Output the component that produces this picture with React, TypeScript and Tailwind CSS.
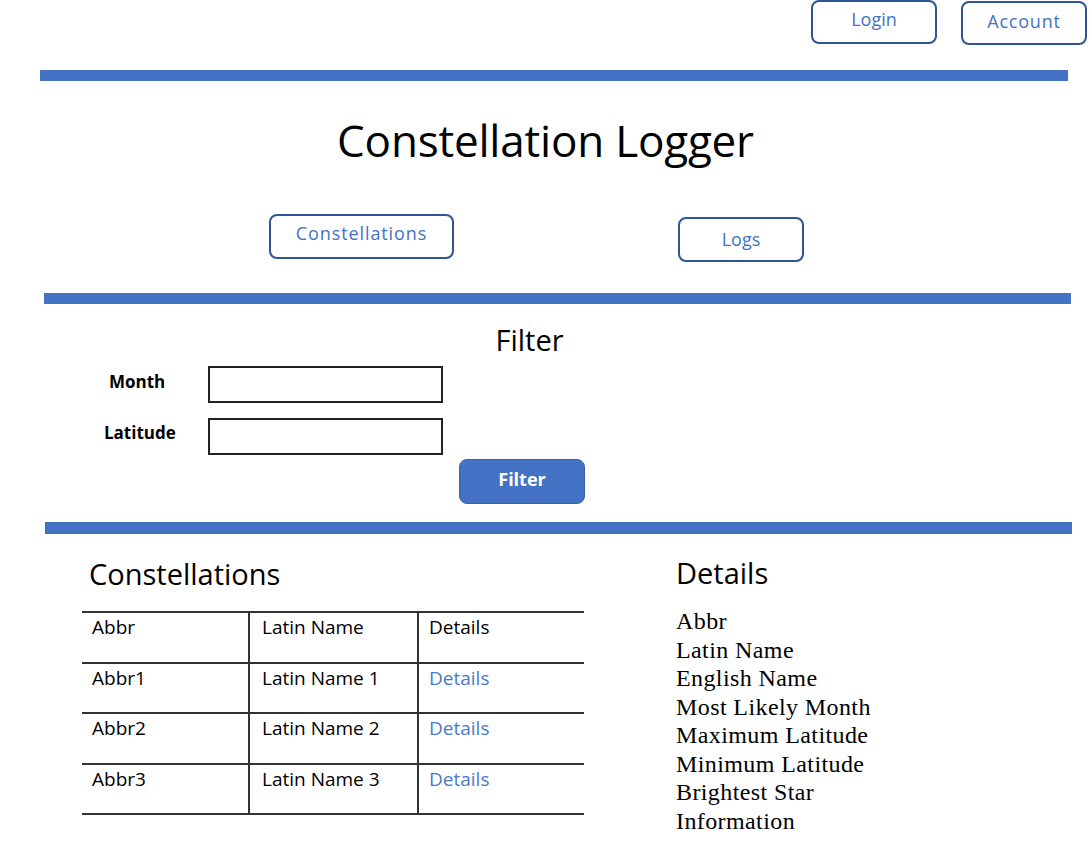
import React from "react";

const sans = { fontFamily: '"Open Sans", "Noto Sans", sans-serif' };

function OutlineBtn({ label, className }: { label: string; className: string }) {
  return (
    <div
      className={`flex items-center justify-center border-2 border-[#2f5597] rounded-[8px] text-[#4472c4] text-[18px] ${className}`}
    >
      {label}
    </div>
  );
}

export default function App() {
  const rows = [
    ["Abbr1", "Latin Name 1"],
    ["Abbr2", "Latin Name 2"],
    ["Abbr3", "Latin Name 3"],
  ];
  const details = [
    "Abbr",
    "Latin Name",
    "English Name",
    "Most Likely Month",
    "Maximum Latitude",
    "Minimum Latitude",
    "Brightest Star",
    "Information",
  ];
  return (
    <div className="w-[1091px] h-[841px] bg-white text-black overflow-hidden" style={sans}>
      {/* top buttons */}
      <div className="flex justify-end items-start pr-[4px] gap-[24px]">
        <OutlineBtn label="Login" className="w-[126px] h-[44px] mt-[0px] pb-[6px]" />
        <OutlineBtn label="Account" className="w-[126px] h-[44px] mt-[1px] pb-[4px] tracking-[0.8px]" />
      </div>
      <div className="ml-[40px] mt-[25px] w-[1028px] h-[11px] bg-[#4472c4]" />

      {/* title */}
      <div className="mt-[31px] flex justify-center">
        <h1 className="text-[44px] leading-[56px] tracking-[-0.2px]">Constellation Logger</h1>
      </div>

      {/* nav */}
      <div className="flex items-start mt-[46px]">
        <OutlineBtn label="Constellations" className="ml-[269px] w-[185px] h-[45px] pb-[6px] tracking-[0.9px]" />
        <OutlineBtn label="Logs" className="ml-[224px] mt-[3px] w-[126px] h-[45px]" />
      </div>

      <div className="ml-[44px] mt-[31px] w-[1027px] h-[11px] bg-[#4472c4]" />

      {/* filter */}
      <div className="relative h-[218px]">
        <div className="flex justify-center pt-[17px]">
          <div className="ml-[-32px] text-[29px] leading-[37px]">Filter</div>
        </div>
        <div className="flex items-center mt-[8px]">
          <div className="w-[208px] pl-[109px] pb-[6px] text-[17px] font-bold">Month</div>
          <div className="w-[235px] h-[37px] border-2 border-[#222]" />
        </div>
        <div className="flex items-center mt-[15px]">
          <div className="w-[208px] pl-[104px] pb-[8px] text-[17px] font-bold">Latitude</div>
          <div className="w-[235px] h-[37px] border-2 border-[#222]" />
        </div>
        <div className="flex mt-[4px]">
          <div className="ml-[459px] w-[126px] h-[45px] rounded-[8px] bg-[#4472c4] border border-[#3b62a8] flex items-center justify-center text-white font-bold text-[18px] pb-[4px]">
            Filter
          </div>
        </div>
      </div>

      <div className="ml-[45px] w-[1027px] h-[12px] bg-[#4472c4]" />

      {/* bottom */}
      <div className="flex">
        <div className="ml-[82px] w-[502px]">
          <div className="pl-[7px] mt-[20px] text-[29px] leading-[40px]">Constellations</div>
          <table className="mt-[17px] w-[502px] border-collapse text-[19px]">
            <tbody>
              <tr className="border-t-2 border-b-2 border-[#333] h-[50.5px] align-top">
                <td className="w-[167px] border-r-2 border-[#333] pl-[10px]">Abbr</td>
                <td className="w-[169px] border-r-2 border-[#333] pl-[12px]">Latin Name</td>
                <td className="pl-[10px]">Details</td>
              </tr>
              {rows.map(([a, l]) => (
                <tr key={a} className="border-b-2 border-[#333] h-[50.5px] align-top">
                  <td className="border-r-2 border-[#333] pl-[10px]">{a}</td>
                  <td className="border-r-2 border-[#333] pl-[12px]">{l}</td>
                  <td className="pl-[10px] text-[#4a7acb]">Details</td>
                </tr>
              ))}
            </tbody>
          </table>
        </div>
        <div className="ml-[92px]">
          <div className="mt-[19px] text-[29px] leading-[40px]">Details</div>
          <div
            className="mt-[14px] text-[24px] leading-[28.5px] tracking-[0.4px]"
            style={{ fontFamily: '"Liberation Serif", "Times New Roman", serif' }}
          >
            {details.map((d) => (
              <div key={d}>{d}</div>
            ))}
          </div>
        </div>
      </div>
    </div>
  );
}
